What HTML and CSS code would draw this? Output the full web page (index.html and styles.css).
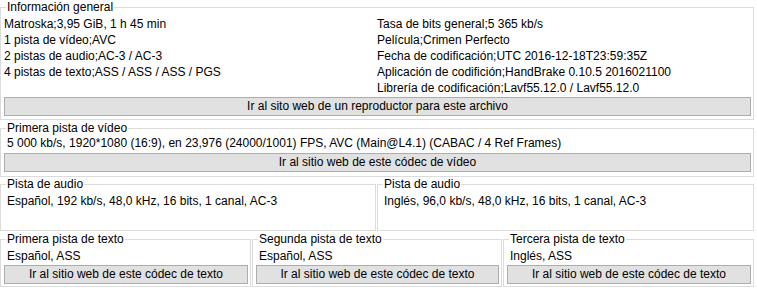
FILE: index.html
```html
<!DOCTYPE html>
<html lang="es">
<head>
<meta charset="utf-8">
<title>MediaInfo</title>
<link rel="stylesheet" href="styles.css">
</head>
<body>
<div class="page">
  <fieldset class="group general">
    <legend>Información general</legend>
    <div class="cols">
      <div class="col">
        <div class="line">Matroska;3,95 GiB, 1 h 45 min</div>
        <div class="line">1 pista de vídeo;AVC</div>
        <div class="line">2 pistas de audio;AC-3 / AC-3</div>
        <div class="line">4 pistas de texto;ASS / ASS / ASS / PGS</div>
      </div>
      <div class="col">
        <div class="line">Tasa de bits general;5 365 kb/s</div>
        <div class="line">Película;Crimen Perfecto</div>
        <div class="line">Fecha de codificación;UTC 2016-12-18T23:59:35Z</div>
        <div class="line">Aplicación de codifición;HandBrake 0.10.5 2016021100</div>
        <div class="line">Librería de codificación;Lavf55.12.0 / Lavf55.12.0</div>
      </div>
    </div>
    <button class="btn" type="button">Ir al sito web de un reproductor para este archivo</button>
  </fieldset>

  <fieldset class="group video">
    <legend>Primera pista de vídeo</legend>
    <div class="info">5 000 kb/s, 1920*1080 (16:9), en 23,976 (24000/1001) FPS, AVC (Main@L4.1) (CABAC / 4 Ref Frames)</div>
    <button class="btn" type="button">Ir al sitio web de este códec de vídeo</button>
  </fieldset>

  <div class="audio-row">
    <fieldset class="group audio">
      <legend>Pista de audio</legend>
      <div class="info">Español, 192 kb/s, 48,0 kHz, 16 bits, 1 canal, AC-3</div>
    </fieldset>
    <fieldset class="group audio">
      <legend>Pista de audio</legend>
      <div class="info">Inglés, 96,0 kb/s, 48,0 kHz, 16 bits, 1 canal, AC-3</div>
    </fieldset>
  </div>

  <div class="text-row">
    <fieldset class="group text">
      <legend>Primera pista de texto</legend>
      <div class="info">Español, ASS</div>
      <button class="btn" type="button">Ir al sitio web de este códec de texto</button>
    </fieldset>
    <fieldset class="group text">
      <legend>Segunda pista de texto</legend>
      <div class="info">Español, ASS</div>
      <button class="btn" type="button">Ir al sitio web de este códec de texto</button>
    </fieldset>
    <fieldset class="group text">
      <legend>Tercera pista de texto</legend>
      <div class="info">Inglés, ASS</div>
      <button class="btn" type="button">Ir al sitio web de este códec de texto</button>
    </fieldset>
  </div>
</div>
</body>
</html>
```
FILE: styles.css
```css
* {
  box-sizing: border-box;
}

html,
body {
  margin: 0;
  padding: 0;
  background: #ffffff;
}

body {
  width: 757px;
  height: 288px;
  overflow: hidden;
  font-family: "Liberation Sans", Arial, sans-serif;
  font-size: 12px;
  line-height: 16px;
  color: #000000;
}

.page {
  width: 754px;
}

.group {
  margin: 0;
  min-width: 0;
  border: 1px solid #dcdcdc;
  padding: 0 2px 3px 3px;
}

.group legend {
  margin-left: 2px;
  padding: 0 1px;
  line-height: 14px;
}

.line,
.info {
  white-space: nowrap;
}

.info {
  padding-left: 3px;
}

.btn {
  display: block;
  width: 100%;
  height: 19px;
  margin: 0;
  padding: 0;
  border: 1px solid #adadad;
  background: #e1e1e1;
  color: #000000;
  font-family: "Liberation Sans", Arial, sans-serif;
  font-size: 12px;
  line-height: 17px;
  text-align: center;
  white-space: nowrap;
}

/* Información general */
.general {
  padding-bottom: 3px;
}

.general .cols {
  display: grid;
  grid-template-columns: 373px 1fr;
  padding-top: 2px;
}

.general .btn {
  margin-top: 1px;
}

/* Vídeo */
.video {
  margin-top: 1px;
  padding-bottom: 4px;
}

.video .btn {
  margin-top: 2px;
}

/* Audio */
.audio-row {
  display: grid;
  grid-template-columns: 376px 377px;
  column-gap: 1px;
}

.audio {
  padding-bottom: 21px;
}

.audio .info {
  padding-top: 2px;
}

/* Texto */
.text-row {
  display: grid;
  grid-template-columns: 251px 250px 251px;
  column-gap: 1px;
  margin-top: 1px;
}

.text {
  padding-bottom: 2px;
}

.text .info {
  padding-top: 2px;
}

.text .btn {
  margin-top: 1px;
}
```
